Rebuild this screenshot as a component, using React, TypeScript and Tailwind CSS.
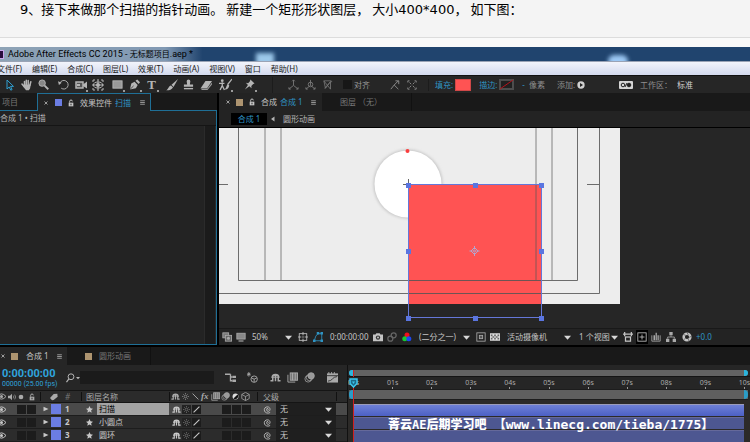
import type { ReactNode } from "react";

const menus = [
  "文件(F)",
  "编辑(E)",
  "合成(C)",
  "图层(L)",
  "效果(T)",
  "动画(A)",
  "视图(V)",
  "窗口",
  "帮助(H)",
];

const layers = [
  { id: 1, name: "扫描", selected: true },
  { id: 2, name: "小圆点", selected: false },
  { id: 3, name: "圆环", selected: false },
];

const seconds = ["00s", "01s", "02s", "03s", "04s", "05s", "06s", "07s", "08s", "09s", "10s"];

// All glyphs are drawn on a 12x12 grid
const glyphs: Record<string, ReactNode> = {
  pointer: <path d="M3 1v9l2.200-2 1.600 3.200 1.300-.7L6.500 7.400H9.500z" fill="none" stroke="currentColor" />,
  hand: (
    <>
      <path
        d="M3.500 6V2.500M5.300 5.500V1.300M7.200 5.500V1.500M9 6l.8-3.300M1 5l2 2.500"
        fill="none"
        stroke="currentColor"
        strokeWidth="1.500"
        strokeLinecap="round"
      />
      <path d="M2.800 5.500h7l-.8 4-1.200 1.800H5L2.500 8z" fill="currentColor" />
    </>
  ),
  zoom: (
    <>
      <circle cx="4.500" cy="4.500" r="3.500" fill="#888" stroke="currentColor" />
      <path d="M7.200 7.200l4 4" stroke="currentColor" strokeWidth="2" />
    </>
  ),
  rotate: (
    <>
      <path d="M2 4.500a4.700 4.700 0 1 1 1.500 5.500" fill="none" stroke="currentColor" />
      <path d="M0 2.500l1 4 3-2.500z" fill="currentColor" />
    </>
  ),
  camera: (
    <>
      <rect x="1" y="3" width="7" height="6" fill="#555" stroke="currentColor" strokeWidth="1.500" />
      <path d="M2 5h3v2H2zM8 5.500L12 2.500v7L8 7z" fill="currentColor" />
    </>
  ),
  behind: (
    <>
      <path d="M1 3V1h2M9 1h2v2M11 9v2H9M3 11H1V9M5 1h2M5 11h2" fill="none" stroke="currentColor" />
      <ellipse cx="6" cy="6" rx="4.500" ry="3" fill="none" stroke="currentColor" />
      <circle cx="6" cy="6" r="2" fill="currentColor" />
      <path d="M6 1.500v9M0 6h12" stroke="currentColor" />
    </>
  ),
  rect: <rect x="1" y="2" width="10" height="8" fill="#999" stroke="currentColor" />,
  pen: (
    <>
      <path d="M1 11.500L2.500 5 6 3l3.500 3.500L7.500 10z" fill="currentColor" />
      <path d="M7 2l3.500 3.500L12 3.500 9 .5z" fill="currentColor" />
      <path d="M1 11.500L5 7.500" stroke="#262626" strokeWidth=".8" />
    </>
  ),
  brush: (
    <>
      <path d="M12 0L5.500 5.800 7.500 8z" fill="currentColor" />
      <path d="M5 6.500L7 8.500C5.500 11 3 11.500 0 11.300 2.500 10.500 2.500 7 5 6.500z" fill="currentColor" />
    </>
  ),
  stamp: (
    <>
      <path d="M4.500 6L4 2.500Q4 .5 6 .5t2 2L7.500 6H11v2.500H1V6z" fill="currentColor" />
      <path d="M1 10.500h10" stroke="currentColor" strokeWidth="1.500" />
    </>
  ),
  eraser: (
    <>
      <path d="M5.500 2H12L7 9.500H.5z" fill="currentColor" />
      <path d="M12 3.500v2L7.500 11H1.500V10H7z" fill="#999" />
    </>
  ),
  roto: (
    <>
      <circle cx="3" cy="2.500" r="1.300" fill="currentColor" />
      <path d="M0 5h5M3 4v3l-2 4M3 7l2 4M12 1L8 6" stroke="currentColor" strokeWidth="1.200" fill="none" />
      <path d="M8 5.500L9.500 7C9 10 7 11 5 10.500 7 9.500 6.500 7 8 5.500z" fill="currentColor" />
    </>
  ),
  pin: (
    <path d="M7 .5l4.500 4.500-1.500.5-2 2 .2 2.500L5.800 7.800 1 11.500 4.300 6.500 2 4.200l2.500.3 2-2z" fill="currentColor" />
  ),
  axis: <path d="M6 7V1M6 7l-5 4M6 7l5 4M4.500 2.500L6 1l1.500 1.500M1 9v2h2M9 11h2V9" fill="none" stroke="currentColor" />,
  axisWorld: (
    <>
      <circle cx="6" cy="6" r="2.500" fill="none" stroke="currentColor" />
      <path d="M6 7V1M6 7l-5 4M6 7l5 4M1 9v2h2M9 11h2V9" fill="none" stroke="currentColor" />
    </>
  ),
  axisView: <path d="M1 1l8 10V2L2 10M1 1l2 9 6-8h2M1 1h9" fill="none" stroke="currentColor" />,
  snap: <path d="M1 11l4-5 5 5M5 6l5-5M6.500 1H10.500v4" fill="none" stroke="currentColor" />,
  frame: (
    <>
      <path d="M1 3V1h2M9 1h2v2M11 9v2H9M3 11H1V9" fill="none" stroke="currentColor" />
      <path d="M3 3l2 2M9 3L7 5M3 9l2-2M9 9L7 7" stroke="currentColor" />
    </>
  ),
  lock: (
    <>
      <rect x="2.500" y="5.500" width="7" height="5.500" fill="currentColor" />
      <path d="M4 5.500V3.500a2 2 0 0 1 4 0" fill="none" stroke="currentColor" strokeWidth="1.500" />
      <rect x="5.300" y="7" width="1.400" height="2.500" fill="#222" />
    </>
  ),
  menu: <path d="M2 3h8M2 6h8M2 9h8" stroke="currentColor" strokeWidth="1.200" />,
  close: <path d="M3 3l6 6M9 3l-6 6" stroke="currentColor" strokeWidth="1.500" />,
  preview: (
    <>
      <rect x="1" y="1" width="7" height="6" fill="#777" stroke="currentColor" />
      <rect x="4" y="4" width="7.500" height="7" fill="#666" stroke="currentColor" />
      <circle cx="7.700" cy="7.500" r="1.800" fill="currentColor" />
    </>
  ),
  monitor: (
    <>
      <rect x="1" y="1.500" width="10" height="7" fill="#888" stroke="currentColor" />
      <path d="M3 10.800h6" stroke="currentColor" strokeWidth="1.400" />
    </>
  ),
  grid: (
    <>
      <rect x="1.500" y="2" width="9" height="8" fill="none" stroke="currentColor" />
      <path d="M6 0v4M6 8v4M0 6h4M8 6h4M5 6h2" stroke="currentColor" />
    </>
  ),
  mask: (
    <>
      <path d="M1.500 10.500Q3 3.500 6 2h4.500v8.500z" fill="none" stroke="currentColor" />
      <path d="M0 9h3v3H0zM4.500 0h3v3h-3zM9 0h3v3H9zM9 9h3v3H9z" fill="currentColor" />
    </>
  ),
  photo: (
    <>
      <path d="M0 3h3l1-1.500h4L9 3h3v8H0z" fill="currentColor" />
      <circle cx="6" cy="6.700" r="2.600" fill="#333" />
      <circle cx="6" cy="6.700" r="1.200" fill="currentColor" />
    </>
  ),
  snapshot: (
    <>
      <circle cx="4" cy="8" r="3" fill="none" stroke="currentColor" strokeWidth="1.500" />
      <circle cx="8" cy="4" r="3" fill="none" stroke="currentColor" strokeWidth="1.500" />
    </>
  ),
  channels: (
    <>
      <circle cx="6" cy="3.500" r="3" fill="#f00f1c" />
      <circle cx="3.300" cy="8" r="3" fill="#17c832" />
      <circle cx="8.200" cy="8" r="3" fill="#1c49f0" />
    </>
  ),
  roi: (
    <>
      <rect x="1" y="1" width="10" height="10" fill="none" stroke="currentColor" />
      <rect x="4" y="4" width="4" height="4" fill="#555" stroke="currentColor" />
    </>
  ),
  checker: (
    <>
      <rect x="0" y="1.500" width="12" height="9" fill="#ddd" />
      <path d="M1 3h2v2H1zM5 3h2v2H5zM9 3h2v2H9zM3 5h2v2H3zM7 5h2v2H7zM1 7h2v2H1zM5 7h2v2H5zM9 7h2v2H9z" fill="#666" />
    </>
  ),
  aspect: (
    <>
      <path d="M0 2.500h12M2 0v5M10 0v5" stroke="currentColor" strokeWidth="1.500" />
      <rect x="3" y="6" width="6" height="5" fill="none" stroke="currentColor" strokeWidth="1.500" />
    </>
  ),
  fast: (
    <>
      <rect x="1" y="1" width="10" height="10" fill="none" stroke="currentColor" />
      <path d="M6 3v6M3 6h6" stroke="currentColor" />
    </>
  ),
  chart: (
    <>
      <path d="M1 4v7h10V4" fill="none" stroke="currentColor" />
      <path d="M3 4h1.800v6H3zM5.500 1h1.500v9H5.500zM7.800 4h1.500v6H7.800z" fill="currentColor" />
    </>
  ),
  flow: (
    <>
      <path d="M4 0h4v4H4zM0 8h4v4H0zM8 8h4v4H8z" fill="currentColor" />
      <path d="M6 4v2M2 8V6h8v2" fill="none" stroke="currentColor" />
    </>
  ),
  exposure: (
    <>
      <circle cx="6" cy="6" r="4" fill="none" stroke="currentColor" strokeWidth="3" />
      <path d="M6 .5l1.500 3M11.500 5l-3 1.500M8.500 11L7.300 8M2 9.500L4 7.500M1.500 3l3 1" stroke="#444" strokeWidth=".8" />
    </>
  ),
  tree: (
    <>
      <path d="M0 2.500h6M6 2.500v7h2M6 5.500h2" fill="none" stroke="currentColor" strokeWidth="1.500" />
      <path d="M8 4h4v2.500H8zM8 8.300h4v2.500H8z" fill="currentColor" />
    </>
  ),
  draft: (
    <>
      <path d="M2 0v5M0 2.500h4M.5 1l3 3M3.500 1l-3 3" stroke="currentColor" strokeWidth=".9" />
      <circle cx="7.800" cy="7.800" r="3.500" fill="none" stroke="currentColor" />
      <path d="M5 6.500l2.800 1.300 2.800-1.300M7.800 7.800V11" fill="none" stroke="currentColor" />
    </>
  ),
  shy: (
    <>
      <path d="M1.500 6.500a4.500 4.500 0 0 1 9 0z" fill="currentColor" />
      <path d="M6 3v7M3 6.500v3H.5M9 6.500v3h2.500" fill="none" stroke="currentColor" strokeWidth="1.600" />
      <circle cx="4.500" cy="5.300" r=".7" fill="#222" />
      <circle cx="7.500" cy="5.300" r=".7" fill="#222" />
    </>
  ),
  film: (
    <>
      <rect x="3.500" y="1" width="8" height="8" fill="#777" stroke="currentColor" />
      <path d="M1 3v8h8M6 1v8M9 1v8" fill="none" stroke="currentColor" />
    </>
  ),
  blur: (
    <>
      <circle cx="4.500" cy="7.500" r="3.500" fill="none" stroke="currentColor" strokeWidth=".8" />
      <circle cx="6" cy="6" r="3.500" fill="none" stroke="currentColor" strokeWidth=".8" />
      <circle cx="7.800" cy="4.200" r="3.500" fill="#999" stroke="currentColor" strokeWidth=".8" />
    </>
  ),
  graph: (
    <>
      <rect x="0" y="1.500" width="12" height="10" fill="currentColor" />
      <path d="M0 4h12" stroke="#333" />
      <path d="M1 10c5 0 5-5 10-5" fill="none" stroke="#333" />
      <path d="M2 0v3M5 0v3M8 0v3" stroke="currentColor" />
    </>
  ),
  search: (
    <>
      <circle cx="6" cy="4.500" r="3.500" fill="none" stroke="currentColor" strokeWidth="1.200" />
      <path d="M3.500 7L.5 11" stroke="currentColor" strokeWidth="1.500" />
    </>
  ),
  eye: (
    <>
      <path d="M0 6q6-7 12 0-6 7-12 0z" fill="none" stroke="currentColor" strokeWidth="1.300" />
      <circle cx="6" cy="6" r="2" fill="currentColor" />
    </>
  ),
  speaker: (
    <>
      <path d="M0 4h3l3-3v10L3 8H0z" fill="currentColor" />
      <path d="M8 4q1.500 2 0 4M10 2.500q3 3.500 0 7" fill="none" stroke="currentColor" />
    </>
  ),
  dot: <circle cx="6" cy="6" r="3.500" fill="currentColor" />,
  tag: <path d="M5.500 1.500L11 1l.5 4.500-6 5L3 11 0 7.500z" fill="currentColor" />,
  sun: (
    <>
      <circle cx="6" cy="6" r="2.300" fill="none" stroke="currentColor" />
      <path d="M6 0v2M6 10v2M0 6h2M10 6h2M2 2l1.300 1.300M8.700 8.700L10 10M10 2L8.700 3.300M2 10l1.300-1.300" stroke="currentColor" />
    </>
  ),
  back: <path d="M1 1l10 10" stroke="currentColor" strokeWidth="1.600" />,
  slash: <path d="M1 11L11 1" stroke="currentColor" strokeWidth="1.800" />,
  half: (
    <>
      <circle cx="6" cy="6" r="5" fill="#ddd" />
      <path d="M9.500 2.500A5 5 0 0 1 2.500 9.500z" fill="#111" />
    </>
  ),
  cube: <path d="M6 .5l5 2.800v5.400l-5 2.800-5-2.800V3.300zM1 3.300L6 6l5-2.700M6 6v5.500" fill="none" stroke="currentColor" />,
  spiral: (
    <path
      d="M6.500 6.500a1 1 0 1 0-1.500-1c-.8 1.800 1 3.500 2.800 2.800 2.500-1 2-5.300-1.300-5.800C3 2 1 5 2 8c1 2.500 4.500 3.800 7.500 2"
      fill="none"
      stroke="currentColor"
      strokeWidth="1.100"
    />
  ),
  star: <path d="M6 0l1.800 4 4.200.5-3.200 2.900.9 4.300L6 9.500l-3.700 2.200.9-4.300L0 4.500 4.200 4z" fill="currentColor" />,
  right: <path d="M1 1.500v9L11 6z" fill="currentColor" />,
  left: <path d="M9 1v10L2 6z" fill="currentColor" />,
  down: <path d="M0 3h12L6 10z" fill="currentColor" />,
  play: (
    <>
      <circle cx="6" cy="6" r="5.500" fill="currentColor" />
      <path d="M4.500 3v6L9 6z" fill="#222" />
    </>
  ),
};

function Icon({ name, className = "size-3" }: { name: string; className?: string }) {
  return (
    <svg viewBox="0 0 12 12" className={`shrink-0 ${className}`} aria-hidden="true">
      {glyphs[name]}
    </svg>
  );
}

function Tool({ label, more, children }: { label: string; more?: boolean; children: ReactNode }) {
  return (
    <button type="button" aria-label={label} className="relative flex h-4 w-[17px] shrink-0 items-center justify-center">
      {children}
      {more && <span className="absolute right-px bottom-px size-[2px] bg-[#9a9a9a]" />}
    </button>
  );
}

function Picker({ label, value, className }: { label: string; value: string; className: string }) {
  return (
    <span className={`relative flex shrink-0 items-center ${className}`}>
      <select aria-label={label} className="w-full appearance-none bg-transparent leading-3 outline-none">
        <option>{value}</option>
      </select>
      <Icon name="down" className="pointer-events-none absolute right-0 size-[7px] text-[#d8d8d8]" />
    </span>
  );
}

function IconButton({ label, name, className = "" }: { label: string; name: string; className?: string }) {
  return (
    <button type="button" aria-label={label} className={`shrink-0 ${className}`}>
      <Icon name={name} className="size-[10px]" />
    </button>
  );
}

function Toolbar() {
  return (
    <div className="flex h-[18px] items-center border-t border-[#111] bg-[#262626] pl-px text-[#b5b5b5]">
      <div className="flex gap-[3px]">
        <div className="flex">
          <Tool label="选取工具">
            <span className="text-[#2f9fd0]">
              <Icon name="pointer" />
            </span>
          </Tool>
          <Tool label="手形工具">
            <Icon name="hand" />
          </Tool>
          <Tool label="缩放工具">
            <Icon name="zoom" className="size-[11px]" />
          </Tool>
        </div>
        <div className="flex">
          <Tool label="旋转工具">
            <Icon name="rotate" className="size-[11px]" />
          </Tool>
          <Tool label="摄像机工具" more>
            <Icon name="camera" />
          </Tool>
          <Tool label="锚点工具">
            <Icon name="behind" />
          </Tool>
        </div>
        <div className="flex">
          <Tool label="矩形工具" more>
            <Icon name="rect" className="size-[11px]" />
          </Tool>
          <Tool label="钢笔工具" more>
            <Icon name="pen" className="size-[11px]" />
          </Tool>
          <Tool label="文字工具" more>
            <span className="font-['Liberation_Serif'] text-[13px] leading-none font-bold">T</span>
          </Tool>
        </div>
        <div className="flex">
          <Tool label="画笔工具">
            <Icon name="brush" />
          </Tool>
          <Tool label="仿制图章工具">
            <Icon name="stamp" className="size-[11px]" />
          </Tool>
          <Tool label="橡皮擦工具">
            <Icon name="eraser" />
          </Tool>
        </div>
        <div className="flex gap-[7px]">
          <Tool label="Roto 笔刷工具" more>
            <Icon name="roto" className="size-[13px]" />
          </Tool>
          <Tool label="操控点工具" more>
            <Icon name="pin" className="size-[11px]" />
          </Tool>
        </div>
      </div>
      <div className="ml-[14px] flex border-l border-[#1c1c1c] pl-3 text-[#777]">
        <Tool label="本地轴模式">
          <Icon name="axis" className="size-[11px]" />
        </Tool>
        <Tool label="世界轴模式">
          <Icon name="axisWorld" className="size-[11px]" />
        </Tool>
        <Tool label="视图轴模式">
          <Icon name="axisView" className="size-[10px]" />
        </Tool>
      </div>
      <label className="ml-[7px] flex items-center gap-[2px] text-[#999]">
        <input type="checkbox" className="size-[9px] appearance-none bg-[#171717]" />
        对齐
      </label>
      <div className="ml-4 flex text-[#999]">
        <Tool label="对齐边缘">
          <Icon name="snap" className="size-[10px]" />
        </Tool>
        <Tool label="对齐特性">
          <Icon name="frame" className="size-[10px]" />
        </Tool>
      </div>
      <div className="ml-2 flex items-center border-l border-[#1c1c1c] pl-[6px] text-[#2f94c4]">
        <button type="button">填充:</button>
        <button type="button" aria-label="填充颜色" className="ml-[2px] h-3 w-4 border border-[#d04848] bg-[#ff5353]" />
        <button type="button" className="ml-2">
          描边:
        </button>
        <button type="button" aria-label="描边颜色" className="ml-[2px] flex h-[11px] w-[15px] border-2 border-[#4d4d4d] bg-[#202020]">
          <svg viewBox="0 0 11 7" className="h-full w-full overflow-visible">
            <path d="M-1 8L12-1" stroke="#b3141c" />
          </svg>
        </button>
        <span className="ml-2">-</span>
        <span className="ml-1 text-[#8f8f8f]">像素</span>
      </div>
      <button type="button" className="ml-3 flex items-center gap-[2px] text-[#8f8f8f]">
        添加:
        <Icon name="play" className="size-2 text-[#d0d0d0]" />
      </button>
      <svg viewBox="0 0 14 8" className="ml-[34px] h-2 w-[14px] shrink-0" aria-hidden="true">
        <rect width="14" height="8" rx="1" fill="#d5d5d5" />
        <circle cx="4" cy="4" r="1.800" fill="#d5d5d5" stroke="#222" />
        <circle cx="10" cy="4" r="1.800" fill="#222" stroke="#222" />
        <path d="M6 6l2-4" stroke="#222" />
      </svg>
      <label className="ml-[7px] flex items-center text-[#8f8f8f]">
        工作区：
        <select className="ml-[5px] w-8 appearance-none bg-transparent text-[#d0d0d0] outline-none">
          <option>标准</option>
        </select>
      </label>
    </div>
  );
}

function EffectControls() {
  return (
    <section className="flex w-[217px] shrink-0 flex-col">
      <div className="flex h-[18px] bg-[#191919] text-[#777]">
        <button type="button" className="w-[37px] border-b border-[#1f6f96] pl-[2px] text-left">
          项目
        </button>
        <div className="flex w-[114px] items-center border-x border-t border-[#1f6f96] bg-[#232323] pl-[5px] text-[#c4c4c4]">
          <Icon name="close" className="size-[6px]" />
          <span className="ml-[6px] size-[7px] bg-[#6b7de3]" />
          <Icon name="lock" className="ml-[5px] size-2" />
          <h2 className="ml-[5px]">效果控件</h2>
          <span className="ml-[3px] text-[#2f94c4]">扫描</span>
          <Icon name="menu" className="ml-2 size-[7px]" />
        </div>
        <div className="flex-1 border-b border-[#1f6f96]" />
      </div>
      <div className="flex flex-1 flex-col border-r border-b border-[#1f6f96] bg-[#232323]">
        <div className="flex h-[15px] items-center border-b border-[#151515] text-[#b5b5b5]">合成 1 • 扫描</div>
        <div className="flex flex-1 justify-end">
          <div className="w-3 border-x border-[#2b2b2b] bg-[#1b1b1b]" />
        </div>
      </div>
    </section>
  );
}

function Viewer() {
  const handles = [
    [189, 57],
    [256, 57],
    [322, 57],
    [189, 123],
    [322, 123],
    [189, 190],
    [256, 190],
    [322, 190],
  ];
  return (
    <svg viewBox="0 0 531 200" className="block h-[200px] w-[531px]" role="img" aria-label="合成 1">
      <defs>
        <filter id="soft" x="-20%" y="-20%" width="140%" height="140%">
          <feGaussianBlur stdDeviation="1.500" />
        </filter>
      </defs>
      <rect width="401" height="176" fill="#ededed" />
      <circle cx="189" cy="56" r="34.500" fill="#c4c4c4" filter="url(#soft)" />
      <circle cx="189" cy="56" r="33.500" fill="#fff" />
      <circle cx="188.500" cy="23" r="2" fill="#f93d3d" />
      <path d="M189.500 51v11M184 56.500h11" stroke="#666" />
      <rect x="189" y="56" width="133" height="120" fill="#ff5353" />
      <g fill="none" stroke="#555" strokeOpacity=".85">
        <path d="M19.500 0v152.500h339V0M0 165.500h380.500V0" />
        <path d="M46 0v152M62 0v152M317 0v152M333 0v152" strokeOpacity=".7" />
        <path d="M0 56.500h9M368 56.500h12M189.500 157v8" />
      </g>
      <rect x="189.500" y="56.500" width="133" height="133" fill="none" stroke="#6577d8" />
      {handles.map(([x, y]) => (
        <rect key={`${x}-${y}`} x={x - 2} y={y - 2} width="5" height="5" fill="#5a75e0" />
      ))}
      <g stroke="#b3a5cf" fill="none">
        <path d="M255.500 119.500l3.500 3.500-3.500 3.500-3.500-3.500z" />
        <path d="M255.500 118v3M255.500 125v3M250.500 123h3M257.500 123h3" />
        <circle cx="255.500" cy="123" r="1" />
      </g>
    </svg>
  );
}

function Composition() {
  return (
    <section className="ml-[2px] min-w-0 flex-1 bg-[#232323]">
      <div className="flex h-[18px] bg-[#191919]">
        <div className="flex w-[103px] items-center bg-[#232323] pl-[6px] text-[#c4c4c4]">
          <Icon name="close" className="size-[6px]" />
          <span className="ml-[5px] size-[7px] bg-[#ad9470]" />
          <Icon name="lock" className="ml-[5px] size-2" />
          <h2 className="ml-[5px]">合成</h2>
          <span className="ml-[3px] text-[#2f94c4]">合成 1</span>
          <Icon name="menu" className="ml-[7px] size-[7px]" />
        </div>
        <button type="button" className="w-[90px] border-r border-[#111] pl-[18px] text-left text-[#777]">
          图层 （无）
        </button>
      </div>
      <div className="flex h-[17px] items-center border-b border-black pl-3 text-[#b5b5b5]">
        <button type="button" className="h-3 w-9 bg-black text-[#2f94c4]">
          合成 1
        </button>
        <Icon name="left" className="ml-[3px] size-[6px]" />
        <button type="button" className="ml-[7px]">
          圆形动画
        </button>
      </div>
      <div className="overflow-hidden bg-[#262626]">
        <Viewer />
      </div>
      <div className="flex h-[17px] items-center border-t border-[#191919] pl-[3px] text-[#c4c4c4]">
        <IconButton label="始终预览" name="preview" className="text-[#aaa]" />
        <IconButton label="主查看器" name="monitor" className="ml-1 text-[#aaa]" />
        <Picker label="放大率" value="50%" className="ml-[6px] w-10" />
        <IconButton label="网格" name="grid" className="ml-[6px]" />
        <IconButton label="蒙版" name="mask" className="ml-[5px] text-[#2f94c4]" />
        <button type="button" className="ml-[7px] w-9">
          0:00:00:00
        </button>
        <IconButton label="拍摄快照" name="photo" className="ml-[7px]" />
        <IconButton label="显示快照" name="snapshot" className="ml-1 text-[#666]" />
        <IconButton label="通道" name="channels" className="ml-[5px]" />
        <Picker label="分辨率" value="(二分之一)" className="ml-[7px] w-[51px]" />
        <IconButton label="目标区域" name="roi" className="ml-[6px] text-[#aaa]" />
        <IconButton label="透明网格" name="checker" className="ml-1" />
        <Picker label="3D 视图" value="活动摄像机" className="ml-[7px] w-16" />
        <Picker label="视图布局" value="1 个视图" className="ml-2 w-[39px]" />
        <IconButton label="像素长宽比" name="aspect" className="ml-[5px]" />
        <IconButton label="快速预览" name="fast" className="ml-[3px] bg-black px-px py-[2px]" />
        <IconButton label="时间轴" name="chart" className="ml-[3px] text-[#aaa]" />
        <IconButton label="流程图" name="flow" className="ml-[5px] text-[#aaa]" />
        <IconButton label="重置曝光度" name="exposure" className="ml-[6px]" />
        <button type="button" className="ml-1 text-[#2f94c4]">
          +0.0
        </button>
      </div>
    </section>
  );
}

function LayerRow({ id, name, selected }: { id: number; name: string; selected: boolean }) {
  return (
    <li className={`flex h-[13px] items-center border-b border-[#1d1d1d] text-[#c8c8c8] ${selected ? "bg-[#4a4a4a]" : "bg-[#2c2c2c]"}`}>
      <button type="button" aria-label={`显示 ${name}`} className="-ml-[3px] w-5">
        <Icon name="eye" className="size-[9px]" />
      </button>
      <span className="size-[9px] bg-[#1c1c1c]" />
      <span className="ml-px size-[9px] bg-[#1c1c1c]" />
      <button type="button" aria-label={`展开 ${name}`} className="ml-[7px]">
        <Icon name="right" className="size-[6px]" />
      </button>
      <span className="ml-[2px] size-[10px] bg-[#6b7de3]" />
      <span className="ml-1 w-[21px] font-bold">{id}</span>
      <Icon name="star" className="size-[7px]" />
      <span className={`ml-[4px] flex h-3 w-[72px] items-center pl-[2px] ${selected ? "bg-[#a3a3a3] text-black" : ""}`}>{name}</span>
      <span className="ml-[3px] flex gap-px">
        <Icon name="shy" className="size-[9px]" />
        <Icon name="sun" className="size-[9px] bg-[#222] p-px text-[#888]" />
        <Icon name="slash" className="size-[9px] bg-[#1c1c1c] p-px" />
      </span>
      <span className="ml-[21px] flex gap-px">
        <span className="size-[9px] bg-[#1c1c1c]" />
        <span className="size-[9px] bg-[#1c1c1c]" />
        <span className="size-[9px] bg-[#1c1c1c]" />
      </span>
      <Icon name="spiral" className="ml-3 size-[9px]" />
      <span className="ml-1 flex h-3 items-center bg-[#1f1f1f] px-1">
        <Picker label={`${name} 父级`} value="无" className="w-[52px]" />
      </span>
    </li>
  );
}

function LayerList() {
  return (
    <div className="w-[348px] shrink-0 border-r border-[#111]">
      <div className="flex h-[25px] items-center pl-[2px]">
        <button type="button" className="w-16 text-left font-['Roboto'] text-[#2fa3dc]">
          <span className="block text-[11px] leading-[13px] font-bold">0:00:00:00</span>
          <span className="block text-[7px] leading-[9px]">00000 (25.00 fps)</span>
        </button>
        <label className="flex items-center text-[#b5b5b5]">
          <Icon name="search" className="size-[10px]" />
          <Icon name="down" className="size-[4px]" />
          <input type="search" aria-label="搜索图层" className="h-[13px] w-[134px] bg-[#1b1b1b] outline-none" />
        </label>
        <div className="ml-[11px] flex flex-1 text-[#aaa]">
          <Icon name="tree" className="size-[11px]" />
          <Icon name="draft" className="ml-[11px] size-[11px]" />
          <Icon name="shy" className="ml-3 size-[11px]" />
          <Icon name="film" className="ml-[6px] size-[11px]" />
          <Icon name="blur" className="ml-[6px] size-[11px]" />
          <Icon name="graph" className="ml-3 size-[11px]" />
        </div>
      </div>
      <div className="flex h-[13px] items-center border-y border-[#151515] bg-[#2b2b2b] text-[#aaa]">
        <Icon name="eye" className="-ml-[3px] size-[9px]" />
        <Icon name="speaker" className="ml-[2px] size-2" />
        <Icon name="dot" className="ml-px size-2" />
        <Icon name="lock" className="ml-[3px] size-2" />
        <span className="ml-1 h-[9px] border-l border-[#111]" />
        <Icon name="tag" className="ml-[9px] size-2" />
        <span className="ml-[7px] w-4 text-[#777] italic">#</span>
        <span className="h-[9px] border-l border-[#111]" />
        <span className="ml-1 w-[83px]">图层名称</span>
        <span className="h-[9px] border-l border-[#111]" />
        <span className="ml-px flex items-center gap-px">
          <Icon name="shy" className="size-[9px]" />
          <Icon name="sun" className="size-[9px] p-px" />
          <Icon name="back" className="size-[9px] p-px" />
          <span className="w-[9px] font-['Liberation_Serif'] text-[9px] leading-[9px] font-bold italic">fx</span>
          <Icon name="film" className="size-[9px]" />
          <Icon name="blur" className="size-[9px]" />
          <Icon name="half" className="size-[9px] p-px" />
          <Icon name="cube" className="size-[9px]" />
        </span>
        <span className="ml-[7px] h-[9px] border-l border-[#111]" />
        <span className="ml-[5px] w-[73px]">父级</span>
        <span className="h-[9px] border-l border-[#111]" />
      </div>
      <ul>
        {layers.map((layer) => (
          <LayerRow key={layer.id} {...layer} />
        ))}
      </ul>
    </div>
  );
}

function TimeRuler() {
  return (
    <div className="relative min-w-0 flex-1 overflow-hidden bg-[#262626] pt-[5px]">
      <div className="mr-[2px] ml-[1px] flex h-[6px] justify-between rounded-full bg-[#636363]">
        <span className="w-1 rounded-l-full bg-[#2bb5de]" />
        <span className="w-1 rounded-r-full bg-[#2bb5de]" />
      </div>
      <div className="mr-[-14px] ml-[-14px] flex h-[13px] border-t border-[#151515] pt-px text-[7px] leading-[9px] text-[#aaa]">
        {seconds.map((s) => (
          <span key={s} className="flex flex-1 flex-col items-center">
            {s}
            <span className="h-[2px] border-l border-[#999]" />
          </span>
        ))}
      </div>
      <div className="mr-[2px] ml-[1px] flex h-[11px] justify-between border-y border-[#1d1d1d] bg-[#5f5f5f]">
        <span className="w-1 rounded-l-sm bg-[#2a9cc6]" />
        <span className="w-1 rounded-r-sm bg-[#2a9cc6]" />
      </div>
      <div className="flex flex-col gap-px bg-[#2c2a28] pt-1 pr-[6px] pl-[6px]">
        <div className="h-3 border-t border-[#9c9cba] bg-linear-to-b from-[#6f80d6] to-[#4c60c4]" />
        <div className="h-3 border-t border-[#65699a] bg-[#4d5791]" />
        <div className="h-3 border-t border-[#65699a] bg-[#4d5791]" />
      </div>
      {/* Playhead */}
      <div className="absolute top-[13px] bottom-0 left-px flex flex-col items-center">
        <span className="absolute -top-2 h-[7px] w-px bg-[#d02020]" />
        <svg viewBox="0 0 9 10" className="h-[10px] w-[9px]" aria-hidden="true">
          <path d="M1 1h7v4.500L4.500 9 1 5.500z" fill="#1d6a88" stroke="#3cc6ee" strokeWidth="1.500" />
          <path d="M3 3.500h3L4.500 6z" fill="#3cc6ee" />
        </svg>
        <span className="w-px flex-1 bg-[#d02020]" />
      </div>
      {/* Watermark */}
      <p className="absolute top-[52px] left-10 font-['DejaVu_Sans_Mono','Noto_Sans_CJK_SC',monospace] text-[12px] leading-4 font-black whitespace-nowrap text-white">
        菁云AE后期学习吧 【<span className="text-[13px]">www.linecg.com/tieba/1775</span>】
      </p>
    </div>
  );
}

export default function App() {
  return (
    <main className="w-full overflow-hidden bg-[#f9f9f9] font-['Noto_Sans','Noto_Sans_CJK_SC',sans-serif]">
      <p className="flex h-[38px] gap-[3px] border-b border-[#dcdcdc] bg-[#f4f4f4] pl-5 font-['DejaVu_Sans','Noto_Sans_CJK_SC',sans-serif] text-[13px] leading-5 whitespace-nowrap text-black">
        <span>9、接下来做那个扫描的指针动画。</span>
        <span>新建一个矩形形状图层，</span>
        <span>大小400*400，</span>
        <span>如下图：</span>
      </p>
      <div className="mt-[9px] bg-black text-[8px] leading-3 whitespace-nowrap">
        <header>
          <div className="relative flex h-[14px] items-center overflow-hidden bg-linear-to-r from-[#8ea3b6] from-0% via-[#8199b3] via-22% to-[#20446e] to-27% font-['Roboto','Noto_Sans_CJK_SC',sans-serif] text-[9px] text-black">
            <span className="h-[9px] w-1 border-y border-r border-[#c9a6ea] bg-[#2a0d3d]" />
            <h1 className="ml-1">
              Adobe After Effects CC 2015 - <span className="text-[8px]">无标题项目</span>.aep *
            </h1>
            <span className="absolute top-[6px] left-[256px] h-3 w-[18px] bg-[#9cc8ea] blur-[2px]" />
            <span className="absolute top-2 left-[608px] h-3 w-5 rounded-full bg-[#9cc8f4] blur-[2px]" />
          </div>
          <nav className="flex h-[14px] items-center border-t border-[#9aa3b5] bg-linear-to-b from-[#f2f4fb] to-[#d3daee] text-[#1c1c1c]">
            <div className="-ml-[3px] flex gap-[10px]">
              {menus.map((item) => (
                <button key={item} type="button">
                  {item}
                </button>
              ))}
            </div>
          </nav>
        </header>
        <Toolbar />
        <div className="flex border-b-2 border-black">
          <EffectControls />
          <Composition />
        </div>
        <section className="bg-[#262626]">
          <div className="flex h-[18px] bg-[#191919] text-[#c4c4c4]">
            <div className="flex w-[67px] items-center bg-[#262626]">
              <Icon name="close" className="size-[6px]" />
              <span className="ml-[5px] size-[7px] bg-[#ad9470]" />
              <h2 className="ml-2">合成 1</h2>
              <Icon name="menu" className="ml-[7px] size-[7px]" />
            </div>
            <button type="button" className="flex w-[84px] items-center border-r border-[#111] pl-[18px] text-[#777]">
              <span className="mr-[7px] size-[7px] bg-[#ad9470]" />
              圆形动画
            </button>
          </div>
          <div className="flex">
            <LayerList />
            <TimeRuler />
          </div>
        </section>
      </div>
    </main>
  );
}
